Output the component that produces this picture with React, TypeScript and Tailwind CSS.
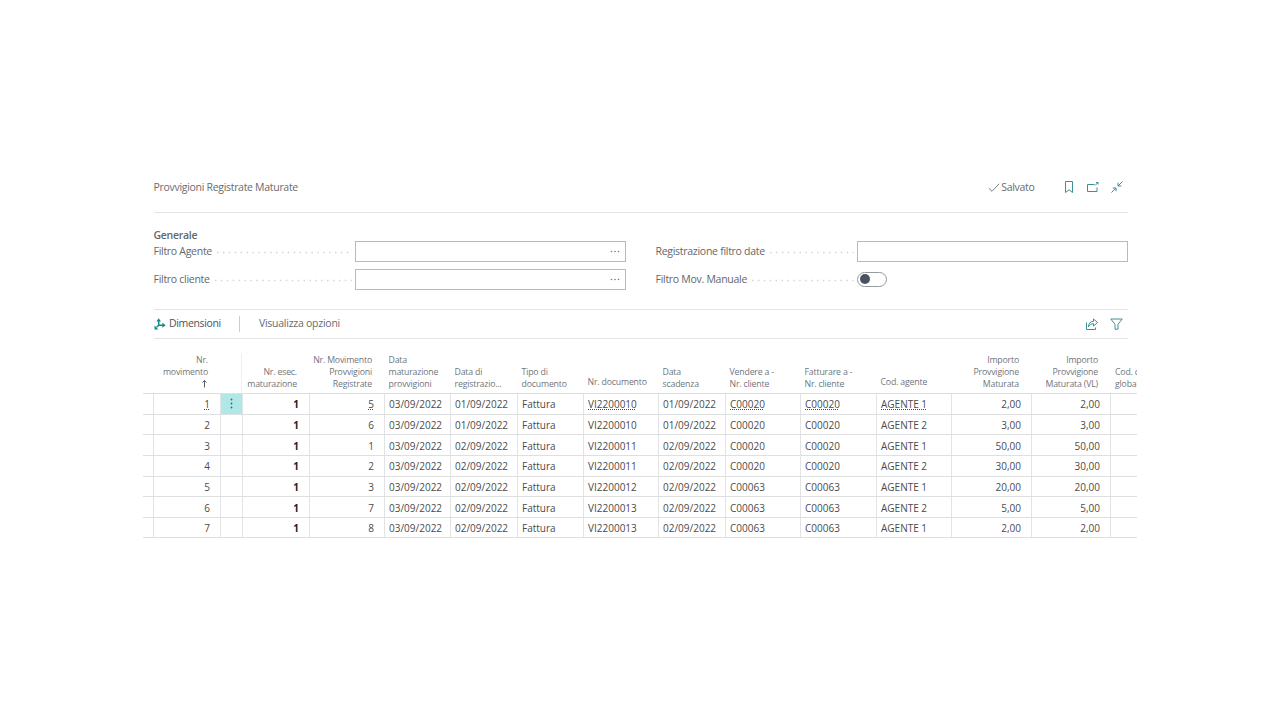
import React from 'react';

interface Column {
  title: string[];
  align: 'left' | 'right';
  single?: boolean;
}

interface Row {
  nr: string;
  mov: string;
  dates: string[];
  doc: string;
  customer: string;
  agent: string;
  amount: string;
}

const GRID = 'grid grid-cols-[10px_67px_22px_67px_75px_66px_67px_66px_75px_67px_75px_76px_75px_80px_79px_27px]';

const columns: Column[] = [
  { title: ['Nr. esec.', 'maturazione'], align: 'right' },
  { title: ['Nr. Movimento', 'Provvigioni', 'Registrate'], align: 'right' },
  { title: ['Data', 'maturazione', 'provvigioni'], align: 'left' },
  { title: ['Data di', 'registrazio...'], align: 'left' },
  { title: ['Tipo di', 'documento'], align: 'left' },
  { title: ['Nr. documento'], align: 'left', single: true },
  { title: ['Data', 'scadenza'], align: 'left' },
  { title: ['Vendere a -', 'Nr. cliente'], align: 'left' },
  { title: ['Fatturare a -', 'Nr. cliente'], align: 'left' },
  { title: ['Cod. agente'], align: 'left', single: true },
  { title: ['Importo', 'Provvigione', 'Maturata'], align: 'right' },
  { title: ['Importo', 'Provvigione', 'Maturata (VL)'], align: 'right' },
];

const rows: Row[] = [
  { nr: '1', mov: '5', dates: ['03/09/2022', '01/09/2022', '01/09/2022'], doc: 'VI2200010', customer: 'C00020', agent: 'AGENTE 1', amount: '2,00' },
  { nr: '2', mov: '6', dates: ['03/09/2022', '01/09/2022', '01/09/2022'], doc: 'VI2200010', customer: 'C00020', agent: 'AGENTE 2', amount: '3,00' },
  { nr: '3', mov: '1', dates: ['03/09/2022', '02/09/2022', '02/09/2022'], doc: 'VI2200011', customer: 'C00020', agent: 'AGENTE 1', amount: '50,00' },
  { nr: '4', mov: '2', dates: ['03/09/2022', '02/09/2022', '02/09/2022'], doc: 'VI2200011', customer: 'C00020', agent: 'AGENTE 2', amount: '30,00' },
  { nr: '5', mov: '3', dates: ['03/09/2022', '02/09/2022', '02/09/2022'], doc: 'VI2200012', customer: 'C00063', agent: 'AGENTE 1', amount: '20,00' },
  { nr: '6', mov: '7', dates: ['03/09/2022', '02/09/2022', '02/09/2022'], doc: 'VI2200013', customer: 'C00063', agent: 'AGENTE 2', amount: '5,00' },
  { nr: '7', mov: '8', dates: ['03/09/2022', '02/09/2022', '02/09/2022'], doc: 'VI2200013', customer: 'C00063', agent: 'AGENTE 1', amount: '2,00' },
];

const Leader = () => (
  <svg className="ml-1 mr-[3px] h-[3px] min-w-0 flex-1" aria-hidden="true">
    <line x1="1" y1="1.5" x2="100%" y2="1.5" stroke="#d2d4d6" strokeWidth="1.4" strokeDasharray="1.5 4.4" />
  </svg>
);

const Field = ({ label, lookup, toggle }: { label: string, lookup?: boolean, toggle?: boolean }) => (
  <div className="flex h-[21px] items-center">
    <div className="flex w-[201px] shrink-0 items-center whitespace-nowrap pt-[2px] text-[10.5px] tracking-[-0.28px] text-[#63676b]">
      {label}
      <Leader />
    </div>
    {toggle ? (
      <div className="flex h-[15px] w-[30px] items-center rounded-full border border-[#96999d] pl-[2px]">
        <div className="h-[10px] w-[10px] rounded-full bg-[#4b5360]" />
      </div>
    ) : (
      <div className="flex h-[21px] flex-1 items-center justify-end border border-[#b9babb] pr-[5px]">
        {lookup && (
          <svg width="10" height="3" viewBox="0 0 10 3" fill="#777b80">
            <circle cx="1.5" cy="1.5" r=".8" />
            <circle cx="5" cy="1.5" r=".8" />
            <circle cx="8.5" cy="1.5" r=".8" />
          </svg>
        )}
      </div>
    )}
  </div>
);

const Cell = ({ children, align = 'left', link, bold }: { children?: React.ReactNode, align?: 'left' | 'right', link?: boolean, bold?: boolean }) => (
  <div className={`flex items-center border-l border-[#e2e3e4] pt-[2px] ${align === 'right' ? 'justify-end pr-[10px]' : 'pl-1'} ${bold ? 'font-bold text-[#222]' : ''}`}>
    <span className={link ? 'underline decoration-dotted decoration-1 underline-offset-1' : ''}>{children}</span>
  </div>
);

const HeaderCell = ({ column }: { column: Column }) => (
  <div className={`flex flex-col justify-end ${column.align === 'right' ? 'items-end pr-3' : 'items-start pl-[4.5px]'} ${column.single ? 'pb-[5px]' : 'pb-[3px]'}`}>
    {column.title.map((line) => <span key={line}>{line}</span>)}
  </div>
);

const PageHeader = () => (
  <div className="ml-[10.5px] mr-[9px] flex h-[37px] justify-between border-b border-[#e3e4e5] text-[10.5px] tracking-[-0.3px] text-[#686c70]">
    <div className="pt-[3.5px] leading-4">Provvigioni Registrate Maturate</div>
    <div className="flex h-6 pr-[5.5px]">
      <div className="flex items-center pr-[28px]">
        <svg width="12" height="12" viewBox="0 0 12 12" fill="none" stroke="#7a7e82" className="mr-px">
          <path d="M.8 6.2 4 9.3 11.2 1.8" />
        </svg>
        Salvato
      </div>
      <div className="flex items-center gap-3 text-[#3d9095]">
        <svg width="12" height="14" viewBox="0 0 12 14" fill="none" stroke="currentColor" className="mb-[2px]">
          <path d="M2.5 1.5h7v11L6 9.7l-3.5 2.8z" />
        </svg>
        <svg width="12" height="12" viewBox="0 0 12 12" fill="none" stroke="currentColor" className="mb-[2px]">
          <path d="M7.5 3.5H.5v7h9.5V6.5M8 4.5 11 1.5M9 1.5h2V3.5" />
        </svg>
        <svg width="12" height="12" viewBox="0 0 12 12" fill="none" stroke="currentColor" className="mb-px">
          <path d="M11.5.5 7 5M7 1.7V5h3.3M.5 11.5 5 7M1.7 7H5v3.3" />
        </svg>
      </div>
    </div>
  </div>
);

const Toolbar = () => (
  <div className="ml-[10.5px] mr-[9px] mt-[19px] flex h-[30px] items-center justify-between border-y border-[#e3e4e5] text-[10.5px] text-[#4f5357]">
    <div className="flex items-center">
      <svg width="12" height="12" viewBox="0 0 12 12" className="mr-[3.5px]" fill="none" stroke="#178a83" strokeWidth="1.5">
        <path d="M4.7 2.5v4.7L2.5 9.3M4.7 7.2h4.5" />
        <path d="M2.4 3.5 4.7.3 7 3.5zM8.3 4.7l3.4 2.5-3.4 2.5zM.5 7.5v3.9h3.9z" fill="#178a83" stroke="none" />
      </svg>
      <span className="pt-[1.5px] tracking-[-0.35px]">Dimensioni</span>
      <div className="ml-[18px] mr-[19px] h-4 w-px bg-[#c9cbcd]" />
      <span className="pt-[1.5px] tracking-[-0.25px] text-[#686c70]">Visualizza opzioni</span>
    </div>
    <div className="flex items-center gap-3 pr-[5px] text-[#3d9095]">
      <svg width="12" height="12" viewBox="0 0 12 12" fill="none" stroke="currentColor">
        <path d="M.5 4.5v7h9V9.5" />
        <path d="M2.5 8.8C2.5 5.500 4.300 3.500 7.500 3.300V1l4 3.500-4 3.500V5.700C5.500 5.700 3.700 6.500 2.500 8.800z" />
      </svg>
      <svg width="13" height="12" viewBox="0 0 13 12" fill="none" stroke="currentColor">
        <path d="M.8 1h11.4L8 6.3v4.9H5V6.3z" />
      </svg>
    </div>
  </div>
);

export default function App() {
  return (
    <div className="h-[720px] w-[1280px] overflow-hidden bg-white pl-[143px] pt-[175.5px] font-['Open_Sans',sans-serif]">
      <div className="w-[994px] overflow-hidden">
        <PageHeader />

        <div className="ml-[10.5px] mr-[8.5px] pt-[14px]">
          <div className="h-[14px] text-[10.5px] font-semibold leading-4 tracking-[-0.28px] text-[#63676b]">Generale</div>
          <div className="grid grid-cols-[472.5px_472.5px] gap-x-[29.5px] gap-y-[7px]">
            <Field label="Filtro Agente" lookup />
            <Field label="Registrazione filtro date" />
            <Field label="Filtro cliente" lookup />
            <Field label="Filtro Mov. Manuale" toggle />
          </div>
        </div>

        <Toolbar />

        {/* Column titles */}
        <div className={`${GRID} mt-[14.5px] h-10 whitespace-nowrap text-[8.75px] leading-3 tracking-[-0.18px] text-[#70757c]`}>
          <div />
          <div className="flex flex-col items-end justify-end pb-[3px] pr-3">
            <span>Nr.</span>
            <span>movimento</span>
            <svg width="7" height="12" viewBox="0 0 7 12" fill="none" stroke="#5c6065">
              <path d="M3.5 9.5V2.5M1.5 4.5l2-2 2 2" />
            </svg>
          </div>
          <div className="border-r border-[#eeefef]" />
          {columns.map((column, i) => <HeaderCell key={i} column={column} />)}
          <div className="flex flex-col justify-end overflow-hidden pb-[3px] pl-[5px]">
            <span>Cod. dim.</span>
            <span>globale 1</span>
          </div>
        </div>

        {/* Entries */}
        <div className="border-b border-[#dedfe0] text-[10px] text-[#4b4b4b]">
          {rows.map((row, i) => (
            <div key={row.nr} className={`${GRID} h-[20.65px] whitespace-nowrap border-t border-[#dedfe0]`}>
              <div />
              <Cell align="right" link={i === 0}>{row.nr}</Cell>
              <div className={`flex items-center justify-center border-l border-[#e2e3e4] ${i === 0 ? 'bg-[#b0e8e8]' : ''}`}>
                {i === 0 && (
                  <svg width="3" height="11" viewBox="0 0 3 11" fill="#4b6466">
                    <circle cx="1.5" cy="1.5" r=".9" />
                    <circle cx="1.5" cy="5.5" r=".9" />
                    <circle cx="1.5" cy="9.5" r=".9" />
                  </svg>
                )}
              </div>
              <Cell align="right" bold>1</Cell>
              <Cell align="right" link={i === 0}>{row.mov}</Cell>
              <Cell>{row.dates[0]}</Cell>
              <Cell>{row.dates[1]}</Cell>
              <Cell>Fattura</Cell>
              <Cell link={i === 0}>{row.doc}</Cell>
              <Cell>{row.dates[2]}</Cell>
              <Cell link={i === 0}>{row.customer}</Cell>
              <Cell link={i === 0}>{row.customer}</Cell>
              <Cell link={i === 0}>{row.agent}</Cell>
              <Cell align="right">{row.amount}</Cell>
              <Cell align="right">{row.amount}</Cell>
              <Cell />
            </div>
          ))}
        </div>
      </div>
    </div>
  );
}
